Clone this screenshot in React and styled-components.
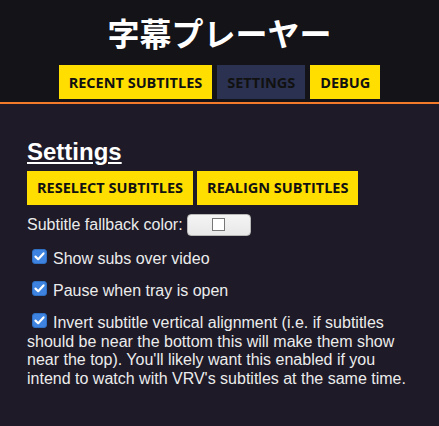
import React from "react"
import styled, { createGlobalStyle } from "styled-components"

const Global = createGlobalStyle`
  html, body {
    margin: 0;
    padding: 0;
    background: #1e1a28;
  }
  body {
    font-family: "Liberation Sans", Arial, sans-serif;
    color: #ececec;
  }
`

const Header = styled.header`
  background: #131318;
  border-bottom: 2px solid #f27a2a;
  padding: 12px 0 3px;
  display: flex;
  flex-direction: column;
  align-items: center;
`

const Title = styled.h1`
  margin: 0;
  font-family: "Noto Sans CJK JP", sans-serif;
  font-weight: 700;
  font-size: 32px;
  line-height: 40px;
  color: #fff;
`

const Tabs = styled.nav`
  display: flex;
  gap: 5px;
  margin-top: 13px;
`

const Tab = styled.button`
  height: 34px;
  padding: 0 10px;
  border: none;
  background: ${p => (p.$active ? "#2b3150" : "#ffde00")};
  color: #111;
  font-family: "Open Sans", sans-serif;
  font-weight: 700;
  font-size: 14.5px;
  cursor: pointer;
`

const Content = styled.main`
  padding: 34px 27px 0;
  display: flex;
  flex-direction: column;
`

const Heading = styled.h2`
  margin: 0 0 5px;
  font-size: 24px;
  font-weight: 700;
  line-height: 27.6px;
  color: #fff;
  text-decoration: underline;
`

const ButtonRow = styled.div`
  display: flex;
  gap: 4px;
`

const ActionButton = styled(Tab)`
  padding: 0 10px;
`

const ColorRow = styled.div`
  display: flex;
  align-items: center;
  gap: 4px;
  margin-top: 9px;
  font-size: 16px;
`

const ColorSwatch = styled.span`
  width: 64px;
  height: 22px;
  box-sizing: border-box;
  border: 1px solid #b8b8b8;
  border-radius: 4px;
  background: linear-gradient(#f4f4f4, #e8e8e8);
  display: flex;
  align-items: center;
  justify-content: center;
  &::after {
    content: "";
    width: 13px;
    height: 13px;
    box-sizing: border-box;
    border: 1px solid #777;
    background: #fff;
  }
`

const Options = styled.div`
  display: flex;
  flex-direction: column;
  gap: 12.6px;
  margin-top: 13.5px;
`

const Option = styled.label`
  font-size: 16px;
  line-height: 18.5px;
`

const Box = styled.svg`
  display: inline-block;
  width: 15px;
  height: 15px;
  margin: 0 6px 0 5px;
  vertical-align: baseline;
`

function Check() {
  return (
    <Box viewBox="0 0 15 15">
      <rect x="0.5" y="0.5" width="14" height="14" rx="2.5" fill="#3d83df" stroke="#2f6fc4" />
      <path d="M3.5 7.6 L6.2 10.2 L11.5 4.4" fill="none" stroke="#fff" strokeWidth="2.2" strokeLinecap="round" strokeLinejoin="round" />
    </Box>
  )
}

export default function App() {
  return (
    <>
      <Global />
      <Header>
        <Title>字幕プレーヤー</Title>
        <Tabs>
          <Tab>RECENT SUBTITLES</Tab>
          <Tab $active>SETTINGS</Tab>
          <Tab>DEBUG</Tab>
        </Tabs>
      </Header>
      <Content>
        <Heading>Settings</Heading>
        <ButtonRow>
          <ActionButton>RESELECT SUBTITLES</ActionButton>
          <ActionButton>REALIGN SUBTITLES</ActionButton>
        </ButtonRow>
        <ColorRow>
          Subtitle fallback color:
          <ColorSwatch />
        </ColorRow>
        <Options>
          <Option><Check />Show subs over video</Option>
          <Option><Check />Pause when tray is open</Option>
          <Option>
            <Check />Invert subtitle vertical alignment (i.e. if subtitles should be near the bottom this will make them show near the top). You'll likely want this enabled if you intend to watch with VRV's subtitles at the same time.
          </Option>
        </Options>
      </Content>
    </>
  )
}
